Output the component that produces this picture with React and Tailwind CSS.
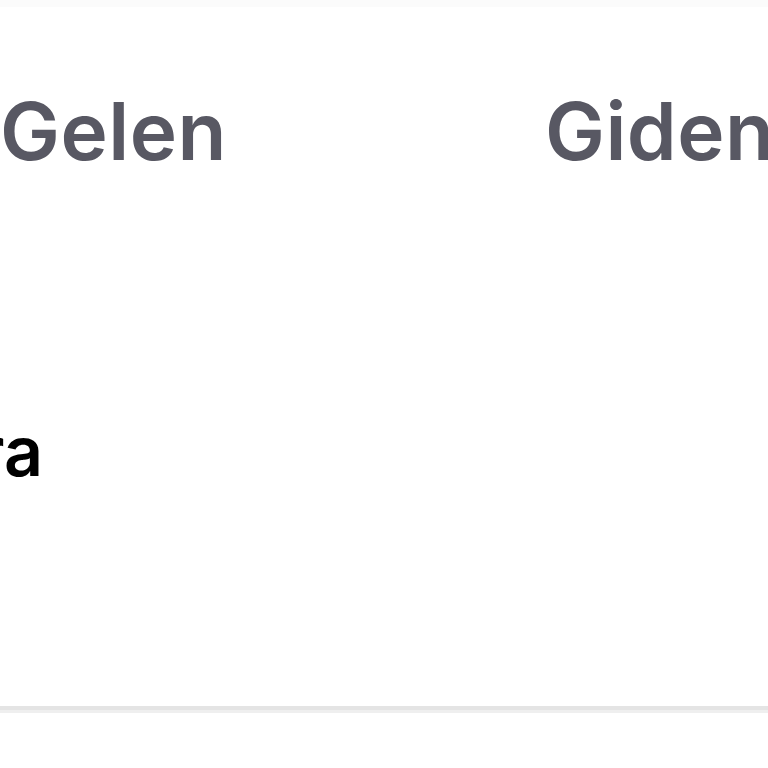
import React from "react";

const Tab = ({ label, className }) => (
    <div className={`shrink-0 text-[80px] font-semibold leading-none tracking-[0.5px] text-[#585863] ${className}`}>
        {label}
    </div>
);

const App = () => {
    return (
        <div
            className="relative w-[768px] h-[768px] overflow-hidden bg-white"
            style={{ fontFamily: "Inter, Lato, sans-serif" }}
        >
            <div className="h-[7px] bg-[#fbfbfb]" />

            {/* tab labels */}
            <div className="flex mt-[84px] whitespace-nowrap">
                <Tab label="Gelen" className="w-[545px]" />
                <Tab label="Giden" />
            </div>

            {/* row text, cut at the left edge */}
            <div className="mt-[246px] flex justify-end w-[43px] overflow-hidden">
                <span className="text-[68px] font-semibold leading-none text-black whitespace-nowrap">
                    ra
                </span>
            </div>

            <div className="mt-[221px] h-[4px] bg-[#e4e4e4]" />
            <div className="h-[3px] bg-[#efefef]" />
        </div>
    );
};

export default App;
